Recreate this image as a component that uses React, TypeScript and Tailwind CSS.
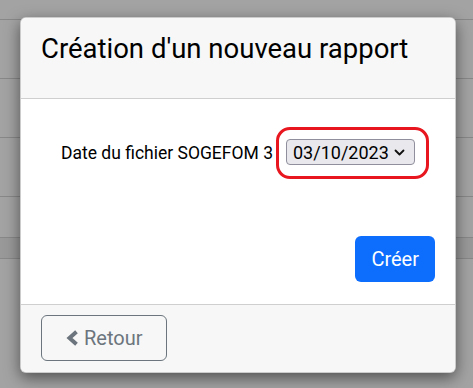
import React from "react";

const rows = [20, 59, 59, 59, 41, 21];

export default function App() {
  return (
    <div
      className="relative w-[473px] h-[388px] overflow-hidden bg-[#a3a3a3]"
      style={{ fontFamily: "Roboto, 'Liberation Sans', sans-serif" }}
    >
      {/* page behind the backdrop */}
      <div className="flex flex-col">
        {rows.map((h, i) => (
          <div
            key={i}
            className={`border-b border-[#888888] ${i === 5 ? "bg-[#999999]" : ""}`}
            style={{ height: h }}
          />
        ))}
      </div>

      {/* modal */}
      <div className="absolute left-[20px] top-[17px] w-[436px] h-[356px] flex flex-col overflow-hidden rounded-md border border-black/20 bg-white shadow-[0_5px_15px_rgba(0,0,0,0.5)]">
        <div className="h-[81px] shrink-0 border-b border-[#cfcfcf] bg-[#f7f7f7] px-[20px] pt-[15px]">
          <h2 className="text-[27.5px] leading-[32px] text-black whitespace-nowrap">
            Création d'un nouveau rapport
          </h2>
        </div>

        <div className="flex-1 flex flex-col px-[20px]">
          <div className="flex items-center pl-[20px] pt-[28px]">
            <span className="shrink-0 whitespace-nowrap text-[17.5px] text-black mr-[3px]">
              Date du fichier SOGEFOM 3
            </span>
            <div className="shrink-0 rounded-[14px] border-[3px] border-[#e8161e] pl-[7px] pr-[11px] pt-[9px] pb-[11px]">
              <div className="flex h-[26px] w-[129px] items-center justify-between rounded-[4px] border border-[#8f8f9d] bg-[#e9e9ed] pl-[6px] pr-[9px]">
                <span className="text-[18px] text-black">03/10/2023</span>
                <svg width="11" height="7" viewBox="0 0 11 7">
                  <path
                    d="M1.5 1.5 L5.5 5.5 L9.5 1.5"
                    fill="none"
                    stroke="#111"
                    strokeWidth="1.8"
                    strokeLinecap="round"
                    strokeLinejoin="round"
                  />
                </svg>
              </div>
            </div>
          </div>
          <div className="flex justify-end pt-[57px]">
            <button className="h-[46px] rounded-md bg-[#0d6efd] px-[16px] text-[20px] text-white">
              Créer
            </button>
          </div>
        </div>

        <div className="h-[68px] shrink-0 border-t border-[#cfcfcf] bg-[#f7f7f7] px-[20px] pt-[10px]">
          <button className="flex h-[46px] items-center gap-[5px] rounded-md border border-[#6c757d] pl-[24px] pr-[23px] text-[20px] text-[#6c757d]">
            <svg width="13" height="16" viewBox="0 0 13 16">
              <path
                d="M10.5 1.8 L3.5 8 L10.5 14.2"
                fill="none"
                stroke="#6c757d"
                strokeWidth="4"
                strokeLinejoin="miter"
              />
            </svg>
            Retour
          </button>
        </div>
      </div>
    </div>
  );
}
